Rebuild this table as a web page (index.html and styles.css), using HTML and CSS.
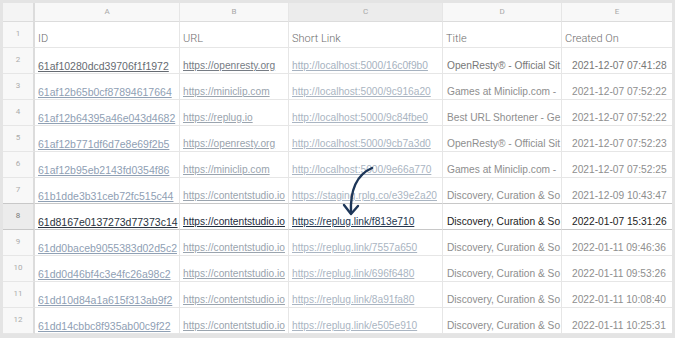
FILE: index.html
```html
<!DOCTYPE html>
<html>
<head>
<meta charset="utf-8">
<link rel="stylesheet" href="styles.css">
</head>
<body>
<div class="frame">
  <div class="sheet">
    <div class="row head">
      <div class="num corner"></div>
      <div class="col">A</div>
      <div class="col">B</div>
      <div class="col sel">C</div>
      <div class="col">D</div>
      <div class="col">E</div>
    </div>
    <div class="row labels">
      <div class="num">1</div>
      <div class="cell">ID</div>
      <div class="cell">URL</div>
      <div class="cell">Short Link</div>
      <div class="cell">Title</div>
      <div class="cell">Created On</div>
    </div>
    <div class="row first">
      <div class="num">2</div>
      <div class="cell id"><u>61af10280dcd39706f1f1972</u></div>
      <div class="cell url"><u>https://openresty.org</u></div>
      <div class="cell sl"><u>http://localhost:5000/16c0f9b0</u></div>
      <div class="cell tt">OpenResty® - Official Sit</div>
      <div class="cell dt">2021-12-07 07:41:28</div>
    </div>
    <div class="row">
      <div class="num">3</div>
      <div class="cell id"><u>61af12b65b0cf87894617664</u></div>
      <div class="cell url"><u>https://miniclip.com</u></div>
      <div class="cell sl"><u>http://localhost:5000/9c916a20</u></div>
      <div class="cell tt">Games at Miniclip.com -</div>
      <div class="cell dt">2021-12-07 07:52:22</div>
    </div>
    <div class="row">
      <div class="num">4</div>
      <div class="cell id"><u>61af12b64395a46e043d4682</u></div>
      <div class="cell url"><u>https://replug.io</u></div>
      <div class="cell sl"><u>http://localhost:5000/9c84fbe0</u></div>
      <div class="cell tt">Best URL Shortener - Ge</div>
      <div class="cell dt">2021-12-07 07:52:22</div>
    </div>
    <div class="row">
      <div class="num">5</div>
      <div class="cell id"><u>61af12b771df6d7e8e69f2b5</u></div>
      <div class="cell url"><u>https://openresty.org</u></div>
      <div class="cell sl"><u>http://localhost:5000/9cb7a3d0</u></div>
      <div class="cell tt">OpenResty® - Official Sit</div>
      <div class="cell dt">2021-12-07 07:52:23</div>
    </div>
    <div class="row">
      <div class="num">6</div>
      <div class="cell id"><u>61af12b95eb2143fd0354f86</u></div>
      <div class="cell url"><u>https://miniclip.com</u></div>
      <div class="cell sl"><u>http://localhost:5000/9e66a770</u></div>
      <div class="cell tt">Games at Miniclip.com -</div>
      <div class="cell dt">2021-12-07 07:52:25</div>
    </div>
    <div class="row">
      <div class="num">7</div>
      <div class="cell id"><u>61b1dde3b31ceb72fc515c44</u></div>
      <div class="cell url"><u>https://contentstudio.io</u></div>
      <div class="cell sl"><u>https://staging.rplg.co/e39e2a20</u></div>
      <div class="cell tt">Discovery, Curation &amp; So</div>
      <div class="cell dt">2021-12-09 10:43:47</div>
    </div>
    <div class="row active">
      <div class="num">8</div>
      <div class="cell id"><u>61d8167e0137273d77373c14</u></div>
      <div class="cell url"><u>https://contentstudio.io</u></div>
      <div class="cell sl"><u>https://replug.link/f813e710</u></div>
      <div class="cell tt">Discovery, Curation &amp; So</div>
      <div class="cell dt">2022-01-07 15:31:26</div>
    </div>
    <div class="row">
      <div class="num">9</div>
      <div class="cell id"><u>61dd0baceb9055383d02d5c2</u></div>
      <div class="cell url"><u>https://contentstudio.io</u></div>
      <div class="cell sl"><u>https://replug.link/7557a650</u></div>
      <div class="cell tt">Discovery, Curation &amp; So</div>
      <div class="cell dt">2022-01-11 09:46:36</div>
    </div>
    <div class="row">
      <div class="num">10</div>
      <div class="cell id"><u>61dd0d46bf4c3e4fc26a98c2</u></div>
      <div class="cell url"><u>https://contentstudio.io</u></div>
      <div class="cell sl"><u>https://replug.link/696f6480</u></div>
      <div class="cell tt">Discovery, Curation &amp; So</div>
      <div class="cell dt">2022-01-11 09:53:26</div>
    </div>
    <div class="row">
      <div class="num">11</div>
      <div class="cell id"><u>61dd10d84a1a615f313ab9f2</u></div>
      <div class="cell url"><u>https://contentstudio.io</u></div>
      <div class="cell sl"><u>https://replug.link/8a91fa80</u></div>
      <div class="cell tt">Discovery, Curation &amp; So</div>
      <div class="cell dt">2022-01-11 10:08:40</div>
    </div>
    <div class="row">
      <div class="num">12</div>
      <div class="cell id"><u>61dd14cbbc8f935ab00c9f22</u></div>
      <div class="cell url"><u>https://contentstudio.io</u></div>
      <div class="cell sl"><u>https://replug.link/e505e910</u></div>
      <div class="cell tt">Discovery, Curation &amp; So</div>
      <div class="cell dt">2022-01-11 10:25:31</div>
    </div>
  </div>
  <svg class="arrow" width="675" height="338" viewBox="0 0 675 338">
    <path d="M372 168 C 356 175, 350 190, 351 213" fill="none" stroke="#1d3658" stroke-width="2.4" stroke-linecap="round"/>
    <path d="M344 205 L351 214 L358 206" fill="none" stroke="#1d3658" stroke-width="2.4" stroke-linecap="round" stroke-linejoin="round"/>
  </svg>
</div>
</body>
</html>
```

FILE: styles.css
```css
* { box-sizing: border-box; }
html, body {
  margin: 0;
  padding: 0;
  background: #e4e4e4;
}
.frame {
  position: relative;
  width: 675px;
  height: 338px;
  padding: 3px 3px 0 3px;
  overflow: hidden;
}
.sheet {
  background: #fff;
  width: 669px;
  display: flex;
  flex-direction: column;
}
.row {
  display: grid;
  grid-template-columns: 32px 145px 109px 154px 119px 110px;
  height: 26px;
  font-family: "Liberation Sans", Arial, sans-serif;
  font-size: 10.2px;
  line-height: 12px;
}
.row > div {
  border-right: 1px solid #e6e6e6;
  border-bottom: 1px solid #e6e6e6;
  overflow: hidden;
  white-space: nowrap;
}
.row > div:last-child { border-right: none; }
.head {
  height: 19px;
  background: #f8f8f8;
}
.head .col {
  font-family: "Roboto", "Liberation Sans", sans-serif;
  font-size: 8px;
  color: #a8a8a8;
  display: flex;
  align-items: center;
  justify-content: center;
  border-bottom: 1px solid #dcdcdc;
}
.head .corner {
  background: #f4f4f4;
  border-bottom: 1px solid #dcdcdc;
  border-right: 2px solid #dcdcdc;
}
.head .sel { background: #ececec; }
.num {
  background: #f8f8f8;
  color: #ababab;
  font-family: "Roboto", "Liberation Sans", sans-serif;
  font-size: 8px;
  display: flex;
  justify-content: center;
  padding-top: 6px;
  border-right: 2px solid #dcdcdc !important;
}
.cell {
  display: flex;
  align-items: flex-end;
  padding: 0 3px 1px 3px;
}
.labels .cell {
  font-family: "Roboto", "Liberation Sans", sans-serif;
  font-weight: 300;
  font-size: 11px;
  color: #6e6e6e;
  padding-bottom: 2px;
}
.id { color: #8fa0b4; font-size: 10.5px; }
.url { color: #9aa4ae; }
.sl { color: #aab5c2; }
.tt { color: #8e8e8e; padding-left: 4px; }
.dt { color: #8e8e8e; padding-left: 10px; }
.first .id { color: #666b72; }
.first .url { color: #767c84; }
.first .sl { color: #a6b2c0; }
.first .tt { color: #777; }
.first .dt { color: #777; }
.active > div {
  border-top: 1px solid #c8c8c8;
  border-bottom: 1px solid #c8c8c8;
}
.active { margin-top: -1px; height: 27px; }
.active .num { background: #ececec; color: #777; }
.active .id { color: #2a3340; }
.active .url { color: #1e2a3a; }
.active .sl { color: #24364f; }
.active .tt { color: #222; }
.active .dt { color: #222; }
.arrow {
  position: absolute;
  left: 0;
  top: 0;
  pointer-events: none;
}
```
